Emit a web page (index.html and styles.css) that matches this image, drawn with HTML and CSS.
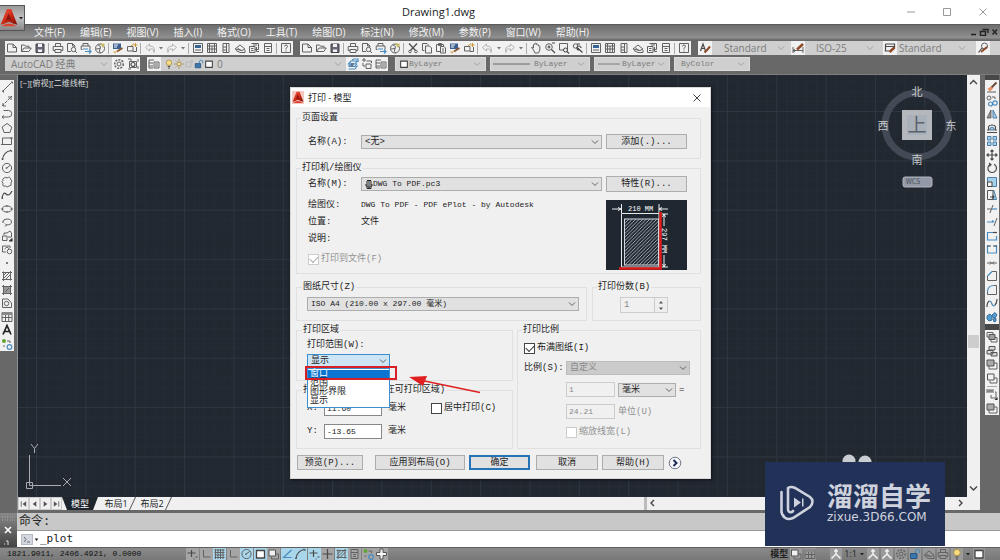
FILE: index.html
```html
<!DOCTYPE html>
<html lang="zh-CN">
<head>
<meta charset="utf-8">
<title>Drawing1.dwg</title>
<link rel="stylesheet" href="styles.css">
</head>
<body>
<svg class="defs" aria-hidden="true">
  <defs>
    <linearGradient id="red" x1="0" y1="0" x2="1" y2="1"><stop offset="0" stop-color="#f0604a"/><stop offset=".5" stop-color="#cf2a17"/><stop offset="1" stop-color="#7d0f08"/></linearGradient>
    <pattern id="grid" x="18" y="36" width="49.35" height="49.35" patternUnits="userSpaceOnUse">
      <path d="M10.4 0V50M20.2 0V50M30.1 0V50M40 0V50M0 10.4H50M0 20.2H50M0 30.1H50M0 40H50" stroke="#242b34" fill="none"/>
      <path d="M.5 0V50M0 .5H50" stroke="#2e3641" fill="none"/>
    </pattern>
    <pattern id="hatch" width="3.5" height="3.5" patternUnits="userSpaceOnUse"><path d="M-1 4.5L4.5 -1M-1 1L1 -1M2.5 4.5L4.5 2.5" stroke="#c5c9cf" stroke-width=".8"/></pattern>
  </defs>
  <symbol id="logo" viewBox="0 0 16 18"><path d="M6 1H10L15.500 15L11.500 14Q8 11 4.500 14L.5 15Z" fill="url(#red)"/><path d="M7.500 5L5 12Q8 9 10.500 12Z" fill="#8c150c"/><path d="M1 16.500Q8 11.500 15 16.500Z" fill="#d9432f"/></symbol>
  <symbol id="down" viewBox="0 0 8 6"><path d="M1 1.500L4 4.500L7 1.500" class="k"/></symbol>
  <symbol id="tri" viewBox="0 0 6 12"><path d="M1 5H5L3 7.500Z" fill="currentColor"/></symbol>
  <symbol id="new" viewBox="0 0 12 12"><path d="M1.500 2H7L10.500 5.500V10H1.500ZM7 2V5.500H10.500" class="k"/></symbol>
  <symbol id="open" viewBox="0 0 12 12"><path d="M1.500 9.500V3H4.500L5.500 4.200H9V6M1.500 9.500L4 6H11.300L8.800 9.500Z" class="k"/></symbol>
  <symbol id="save" viewBox="0 0 12 12"><path d="M2 2H10V10.500H2Z" fill="#667" stroke="#444"/><path d="M4 2H8V5H4ZM4 7.500H8V10H4Z" fill="#f4f4f4"/></symbol>
  <symbol id="print" viewBox="0 0 12 12"><path d="M3.500 4.500V1.500H8.500V4.500M3 8.500H1.200V4.500H10.800V8.500H9M3 7.500H9V10.500H3Z" class="k"/></symbol>
  <symbol id="preview" viewBox="0 0 12 12"><path d="M5 9.500H1.500V1.500H6.500L9 4V5M6.500 1.500V4H9" class="k"/><circle cx="7.500" cy="7.500" r="2.200" class="k"/><path d="M9 9L11 11" class="k"/></symbol>
  <symbol id="publish" viewBox="0 0 12 12"><path d="M3 4V1.500H8V4M2.500 7.500H1.200V4H10V7.500" class="k"/><path d="M3 7H8M5 9.500H11M9 7.500L11 9.500L9 11.500" class="b"/></symbol>
  <symbol id="globe" viewBox="0 0 12 12"><circle cx="6" cy="6.500" r="4.500" class="k"/><path d="M4 3Q8 4 6 7T7 11M2 7L6 6.500" class="k"/><path d="M6 1L11 2L9 6Z" fill="#c9b860"/></symbol>
  <symbol id="match" viewBox="0 0 12 12"><path d="M1 1.500H9V7H1Z" fill="#3c5f91"/><path d="M2 3H6M2 5H5" stroke="#fff"/><path d="M5 9.500L10.500 6" stroke="#8b572d" stroke-width="2"/><path d="M1 9.500H5L3 11.500Z" fill="#d6a44a"/></symbol>
  <symbol id="block" viewBox="0 0 12 12"><path d="M1.500 4.500H7V9H1.500ZM7 9.500H10.500V5" class="k"/><path d="M5 4L8 1.500M9.500 1V5M7.500 3H11.500" stroke="#c99834" fill="none"/></symbol>
  <symbol id="undo" viewBox="0 0 12 12"><path d="M5.500 2L1.500 5.500L5.500 9V7H8Q10 7 10 10.500Q12 4 5.500 4Z" class="g"/></symbol>
  <symbol id="redo" viewBox="0 0 12 12"><path d="M6.500 2L10.500 5.500L6.500 9V7H4Q2 7 2 10.500Q0 4 6.500 4Z" class="g"/></symbol>
  <symbol id="props" viewBox="0 0 12 12"><path d="M1.500 1.500H10.500V10.500H1.500Z" class="k"/><path d="M3 3H9V6H3Z" fill="#376694"/><path d="M3 8H9" class="k"/></symbol>
  <symbol id="dc" viewBox="0 0 12 12"><path d="M1.500 1.500H10.500V10.500H1.500ZM3.500 2V10M1.500 4H10.500M1.500 7H10.500M6 4V10M8.500 2V10" class="k"/></symbol>
  <symbol id="palette" viewBox="0 0 12 12"><path d="M3 1.500H9V10.500H3ZM6.500 1.500V10.500M3 5H6M3 8H6" class="k"/></symbol>
  <symbol id="sheet" viewBox="0 0 12 12"><path d="M1 7L6 3L11 7L8 8.500ZM2 8.500L6 10.500H11V8M3.500 6L7 8.500" class="k"/></symbol>
  <symbol id="markup" viewBox="0 0 12 12"><path d="M3.500 1.500H10.500V7.500H7M1.500 4.500H7V10.500H1.500ZM3 6.500H5.500M3 8.500H5.500M5 3H9M8.500 5V9.500H11" class="k"/></symbol>
  <symbol id="calc" viewBox="0 0 12 12"><path d="M2.500 1.500H9.500V10.500H2.500ZM2.500 4.500H9.500M4.500 6.500H7.500M4.500 8.500H7.500" class="k"/></symbol>
  <symbol id="help" viewBox="0 0 12 12"><path d="M1.500 1.500H10.500V10.500H1.500ZM4.500 4.500Q4.500 3 6 3Q7.500 3 7.500 4.500L6 6.500V7.500M6 8.500V9.500" class="k"/></symbol>
  <symbol id="cut" viewBox="0 0 12 12"><path d="M2 1.500L8.500 8.500M10 1.500L3.500 8.500" class="k2"/><circle cx="3" cy="9.500" r="1.300" class="k"/><circle cx="9" cy="9.500" r="1.300" class="k"/></symbol>
  <symbol id="copy" viewBox="0 0 12 12"><path d="M3.500 8.500H1.500V1.500H6L7.500 3M4.500 4H8.500L10.500 6V11H4.500Z" class="k"/></symbol>
  <symbol id="paste" viewBox="0 0 12 12"><path d="M5 9.500H1.500V2.500H8.500V4M3.500 1.500H6.500V3.500H3.500ZM5.500 4.500H9L10.500 6V11H5.500ZM7 7H9M7 9H9" class="k"/></symbol>
  <symbol id="pan" viewBox="0 0 12 12"><path d="M3.500 8L1.500 5.500Q2 4.500 3.500 6V2.500Q4.300 1.500 5 2.500V1.500Q6 .5 6.600 1.500V2.500Q7.500 1.500 8.300 3V4Q9.500 3 9.800 4.500V8L8.500 11H5Z" class="k"/></symbol>
  <symbol id="zoom" viewBox="0 0 12 12"><circle cx="5" cy="5" r="3.300" class="k"/><path d="M7.500 7.500L11 11M3.500 5H6.500M5 3.500V6.500M8 1H11" class="k2"/></symbol>
  <symbol id="zoomw" viewBox="0 0 12 12"><path d="M1.500 1.500H9.500V8H1.500Z" class="k"/><circle cx="7.500" cy="8" r="2" fill="#f2f2f2" stroke="#444"/><path d="M9 9.500L11 11.500" class="k2"/></symbol>
  <symbol id="zoomp" viewBox="0 0 12 12"><circle cx="3.500" cy="4" r="2.200" class="k"/><path d="M5 5.500L10.500 10.500M5 2H8M9 6A2 2 0 1 0 7 8" class="k2"/></symbol>
  <symbol id="style" viewBox="0 0 12 12"><path d="M1.500 9L4 2L6.500 9M2.500 6.500H5.500" class="k2"/><path d="M5.500 10.500L8 8L11 4.500" stroke="#8b4a25" stroke-width="2" fill="none"/></symbol>
  <symbol id="dim" viewBox="0 0 12 12"><path d="M1 5V11M11 5V11M1 8.500H11M3 7L1 8.500L3 10" class="k"/><path d="M5 7.500L11 2" stroke="#8b4a25" stroke-width="2.500"/></symbol>
  <symbol id="tbl" viewBox="0 0 12 12"><path d="M1.500 2H10.500V6M1.500 2V9H5M1.500 4.500H10.500" class="k2"/><path d="M5.500 10L10.500 5.500" stroke="#8b4a25" stroke-width="2.500"/></symbol>
  <symbol id="mld" viewBox="0 0 12 12"><circle cx="7.500" cy="4" r="3" class="k"/><path d="M5 6L1.500 10.500" class="k2"/><path d="M4 10L10 5" stroke="#8b4a25" stroke-width="2"/></symbol>
  <symbol id="gear" viewBox="0 0 12 12"><circle cx="6" cy="6" r="4.300" stroke="#666" stroke-width="1.600" stroke-dasharray="2 1.200" fill="none"/><circle cx="6" cy="6" r="2" class="k"/></symbol>
  <symbol id="ws" viewBox="0 0 12 12"><path d="M1 1L4 1V3M11 1V4M1 11H4M11 11V8M2.500 3.500H9.500V9.500H2.500Z" class="k"/><circle cx="6" cy="6.500" r="2" class="k2"/></symbol>
  <symbol id="layers" viewBox="0 0 12 12"><path d="M1 2H6M1 5H5M1 8H5M1 2V10H5M6 4H11V10H6ZM7 6H10M7 8H10" class="k"/></symbol>
  <symbol id="lay2" viewBox="0 0 12 12"><path d="M1.500 6L4 3H10L8 6ZM1.500 8.500L3.500 6M1.500 8.500H8L10 5.500M1.500 11H8L10.500 7.500M5 2L7 1H11V4" class="b"/><path d="M4 5H7L6 9H3Z" fill="#59799b"/></symbol>
  <symbol id="lay3" viewBox="0 0 12 12"><path d="M1 2H5M3 0V4M5.500 3H10.500V5M5 6H10V10.500H5ZM2 5V8H4" class="k"/></symbol>
  <symbol id="bulb" viewBox="0 0 12 12"><circle cx="6" cy="4.500" r="3.300" fill="#f7dc85" stroke="#a9904a"/><path d="M4.500 9H7.500M5 11H7" class="k2"/></symbol>
  <symbol id="sun" viewBox="0 0 12 12"><circle cx="6" cy="6" r="2.500" fill="#f5e19a" stroke="#8f773c"/><path d="M6 0V2M6 10V12M0 6H2M10 6H12M2 2L3 3M9 9L10 10M10 2L9 3M3 9L2 10" stroke="#a08236"/></symbol>
  <symbol id="page" viewBox="0 0 12 12"><path d="M2.500 3.500H8.500V9.500H2.500ZM8 2H10V5" class="g"/></symbol>
  <symbol id="lock" viewBox="0 0 12 12"><path d="M1.500 5.500H8V10.500H1.500Z" fill="#3977ad" stroke="#295780"/><path d="M6.500 5V2.500Q8.500 0 10.500 2.500V5" class="b"/></symbol>
  <symbol id="sq" viewBox="0 0 12 12"><path d="M2 2.500H10V10H2Z" fill="#fff" stroke="#444" stroke-width="1.300"/></symbol>
  <symbol id="rule" viewBox="0 0 40 12" preserveAspectRatio="none"><path d="M0 6H40" stroke="#666"/></symbol>
  <symbol id="line" viewBox="0 0 12 12"><path d="M1.500 10.500L10.500 1.500" class="k"/><path d="M1 10H2.500V11.500M10 1H11.500V2.500" class="k"/></symbol>
  <symbol id="xline" viewBox="0 0 12 12"><path d="M1 11L11 1" class="k" stroke-dasharray="3 1"/><path d="M2 8V11H5M7 2H10V5" class="k"/></symbol>
  <symbol id="pline" viewBox="0 0 12 12"><path d="M2.500 2.500H7.500A3 3 0 0 1 7.500 9H1.500M3 7.500L1 9L3 10.500" class="k"/></symbol>
  <symbol id="poly" viewBox="0 0 12 12"><path d="M6 1.500L10.800 5L9 10.500H3L1.200 5Z" class="k"/></symbol>
  <symbol id="rect" viewBox="0 0 12 12"><path d="M1.500 3H10.500V9.500H1.500ZM0 9.500H3M9 3H12" class="k"/></symbol>
  <symbol id="arc" viewBox="0 0 12 12"><path d="M1.500 11Q2 3 10 1.500M.5 10H2.500M9 1L11 2.500" class="k2"/></symbol>
  <symbol id="circle" viewBox="0 0 12 12"><circle cx="6" cy="6" r="4.600" class="k"/><path d="M5 6.500L9 3.500M4.500 6H6.500" class="k"/></symbol>
  <symbol id="cloud" viewBox="0 0 12 12"><path d="M3 2Q5 .5 6 2Q9 0 9.500 3Q12 5 10 7Q11 10 8 10Q6 12 4.500 10Q1 11 2 7.500Q0 5 2 4.500Q1 3 3 2Z" class="k"/></symbol>
  <symbol id="spline" viewBox="0 0 12 12"><path d="M1 10Q2 2 5 5T11 2M1 9.500H2" class="k2"/></symbol>
  <symbol id="ellipse" viewBox="0 0 12 12"><ellipse cx="6" cy="6" rx="4.700" ry="3" class="k"/><path d="M6 2V4M6 8V10M0 6H2.500M9.500 6H12" class="k"/></symbol>
  <symbol id="earc" viewBox="0 0 12 12"><path d="M2 6Q2 3 6 3Q10.500 3 10.500 6Q10.500 9 5 9M4 7.500L5.500 9L4 10.500M1 6H3" class="k"/></symbol>
  <symbol id="insert" viewBox="0 0 12 12"><path d="M1.500 6H6V10.500H1.500ZM3 5V3H6L9 1L10.500 3V7H7M8 11L11 8.500" class="k"/><path d="M11.500 8V11.500H8Z" fill="#222"/></symbol>
  <symbol id="mkblock" viewBox="0 0 12 12"><path d="M5 9H1.500V3H9V5M3.500 6L6 4L8.500 6" class="k"/><circle cx="8.500" cy="8.500" r="2.300" class="k"/></symbol>
  <symbol id="point" viewBox="0 0 12 12"><path d="M5.200 5.200H6.800V6.800H5.200Z" fill="#333"/></symbol>
  <symbol id="hatchi" viewBox="0 0 12 12"><path d="M2.500 1.500V11M9.500 1V10.500M1 2.500H11M1 9.500H11M2 9L9 2M4 10L10 4M2 6L6 2" class="k"/></symbol>
  <symbol id="grad" viewBox="0 0 12 12"><path d="M2.500 2.500H9.500V9.500H2.500Z" fill="#999"/><path d="M2.500 1V11M9.500 1V11M1 2.500H11M1 9.500H11M4 8L8 4" class="k"/></symbol>
  <symbol id="region" viewBox="0 0 12 12"><path d="M1.500 2H7L10.500 6V10.500H1.500Z" class="k"/><circle cx="5.500" cy="6.500" r="2.200" class="k"/></symbol>
  <symbol id="table" viewBox="0 0 12 12"><path d="M1 1.500H11V10.500H1ZM1 6.500H11M4.500 3V10.500M7.700 3V10.500" class="k"/><path d="M1 1H11V4H1Z" fill="#888"/></symbol>
  <symbol id="mtext" viewBox="0 0 12 12"><path d="M2 10.500L6 1.500L10 10.500M3.500 7.500H8.500" fill="none" stroke="#222" stroke-width="1.700"/></symbol>
  <symbol id="addsel" viewBox="0 0 12 12"><circle cx="3" cy="3" r="2" fill="#60a532"/><circle cx="8.500" cy="9" r="2.300" class="b"/><path d="M6 3H9V5M2 8H4" class="k"/></symbol>
  <symbol id="erase" viewBox="0 0 12 12"><path d="M4 8L10.500 1.500" stroke="#6b4a35" stroke-width="2"/><path d="M1.500 8L4 10.500L7 7.500L5 5.500Z" fill="#e39062"/><path d="M1 11H10" class="k"/></symbol>
  <symbol id="cpy" viewBox="0 0 12 12"><circle cx="3" cy="3" r="2" class="k"/><circle cx="4.500" cy="9" r="2" class="b"/><circle cx="9" cy="8" r="2.200" class="b"/><path d="M6 2H9V4" class="k"/></symbol>
  <symbol id="mirror" viewBox="0 0 12 12"><path d="M5 2L1 10H5Z" fill="#999" stroke="#444" stroke-width=".7"/><path d="M7 2L11 10H7Z" class="f"/></symbol>
  <symbol id="offset" viewBox="0 0 12 12"><path d="M1 10.500H11M1 8H3Q1 3 6 3T9 8H11" class="k2"/><path d="M4 8Q4 5 6 5T8 8Z" class="f"/></symbol>
  <symbol id="array" viewBox="0 0 12 12"><path d="M1.500 1.500H5V5H1.500ZM7 1.500H10.500V5H7ZM1.500 7H5V10.500H1.500ZM7 7H10.500V10.500H7Z" class="f"/></symbol>
  <symbol id="move" viewBox="0 0 12 12"><path d="M6 1V11M1 6H11M4.500 2.500L6 1L7.500 2.500M4.500 9.500L6 11L7.500 9.500M2.500 4.500L1 6L2.500 7.500M9.500 4.500L11 6L9.500 7.500" class="k2"/></symbol>
  <symbol id="rotate" viewBox="0 0 12 12"><path d="M4 2.500A4.300 4.300 0 1 0 8 2.300M3 1L5 2.500L3.500 4.500" class="k2"/></symbol>
  <symbol id="scale" viewBox="0 0 12 12"><path d="M1.500 1.500H10.500V10.500H1.500Z" class="f"/><path d="M1.500 6H6V10.500H1.500Z" fill="#f4f4f4" stroke="#444"/></symbol>
  <symbol id="stretch" viewBox="0 0 12 12"><path d="M5 1.500H8L10.500 10.500H5Z" class="f"/><path d="M1.500 1.500H7V10.500H1.500Z" fill="#f4f4f4" stroke="#555"/><path d="M4 8H8M6.500 6.500L8 8L6.500 9.500" class="k2"/></symbol>
  <symbol id="trim" viewBox="0 0 12 12"><path d="M1 6H5M4 10L7 2" class="k"/><path d="M6 6H11" class="b"/></symbol>
  <symbol id="extend" viewBox="0 0 12 12"><path d="M8 10L11 2" class="k"/><path d="M1 6H8M6 4.500L8 6" class="b"/></symbol>
  <symbol id="brk" viewBox="0 0 12 12"><path d="M8 2.500H1.500V10H10.500V6" class="b"/><path d="M7 2.500H11" class="k2"/></symbol>
  <symbol id="brk2" viewBox="0 0 12 12"><path d="M3.500 3H1.500V10H10.500V3H8.500" class="b"/><path d="M1 3H5M7 3H11" class="k2"/></symbol>
  <symbol id="join" viewBox="0 0 12 12"><path d="M1 6H11M4 4.500L5.500 6L4 7.500M8 4.500L6.500 6L8 7.500" class="k"/></symbol>
  <symbol id="chamf" viewBox="0 0 12 12"><path d="M1.500 6V10.500H10.500V1.500H6" class="k"/><path d="M1.500 6L6 1.500" class="b"/></symbol>
  <symbol id="fillet" viewBox="0 0 12 12"><path d="M1.500 8V10.500H10.500V1.500H8" class="k"/><path d="M1.500 8Q1.500 1.500 8 1.500" class="b"/></symbol>
  <symbol id="blend" viewBox="0 0 12 12"><path d="M1 10Q1 5 3.500 4M9 8Q11 6 11 2" class="k2"/><path d="M3.500 4Q5 4 6 7T9 8" class="b"/></symbol>
  <symbol id="explode" viewBox="0 0 12 12"><path d="M1 5L4 3L6 5V9L3 10L1 8Z" fill="#4f9fd2" stroke="#3c6f99"/><path d="M6 4L9 1.500L11 4L9 7L7 6.500ZM7 8L10 7.500V10L8 11Z" fill="#4f9fd2" stroke="#3c6f99"/></symbol>
  <symbol id="o1" viewBox="0 0 12 12"><path d="M1 1.500H7V6H1ZM5 6.500H11V11H5Z" class="k"/><path d="M3 3.500H9V8.500H3Z" fill="#9a9da2" stroke="#555"/></symbol>
  <symbol id="o2" viewBox="0 0 12 12"><path d="M3 1.500H9V5H3ZM1 5.500H7V9H1ZM5 7.500H11V11H5Z" fill="#d5d7da" stroke="#555"/></symbol>
  <symbol id="o3" viewBox="0 0 12 12"><path d="M3 5H11V11H3Z" class="k"/><path d="M1 2H8V8H1Z" fill="#aaa" stroke="#555"/></symbol>
  <symbol id="o4" viewBox="0 0 12 12"><path d="M5 6H11V11H4V9" class="k"/><path d="M1.500 2H8V8H1.500Z" fill="#f1f1f1" stroke="#555"/></symbol>
  <symbol id="o5" viewBox="0 0 12 12"><path d="M1 3H7M1 1V5M3 1V5M5 1V5M7 1V5M5 7V10H10V4H9" class="k"/><path d="M11.500 9V12H8.500Z" fill="#222"/></symbol>
  <symbol id="plus" viewBox="0 0 12 12"><path d="M6 1V11M1 6H11" class="k2"/></symbol>
  <symbol id="plusw" viewBox="0 0 12 12"><path d="M4.500 1H7.500V4.500H11V7.500H7.500V11H4.500V7.500H1V4.500H4.500Z" fill="#f5f5f5" stroke="#555"/></symbol>
  <symbol id="snap" viewBox="0 0 12 12"><path d="M5 2V9M1 5H9M9 9H11M7 11H8" class="k2"/></symbol>
  <symbol id="gridi" viewBox="0 0 12 12"><path d="M2 1V11M4.500 1V11M7 1V11M9.500 1V11M1 2H11M1 4.500H11M1 7H11M1 9.500H11" class="k"/></symbol>
  <symbol id="ortho" viewBox="0 0 12 12"><path d="M3 2V9H10" class="k"/></symbol>
  <symbol id="angle" viewBox="0 0 12 12"><path d="M10 2L2 9.500H10" class="b"/></symbol>
  <symbol id="first" viewBox="0 0 10 10"><path d="M2.500 2V8" class="k"/><path d="M8 2L4 5L8 8Z" fill="#555"/></symbol>
  <symbol id="prev" viewBox="0 0 10 10"><path d="M7 2L3 5L7 8Z" fill="#555"/></symbol>
  <symbol id="next" viewBox="0 0 10 10"><path d="M3 2L7 5L3 8Z" fill="#555"/></symbol>
  <symbol id="last" viewBox="0 0 10 10"><path d="M7.500 2V8" class="k"/><path d="M2 2L6 5L2 8Z" fill="#555"/></symbol>
  <symbol id="ppl" viewBox="0 0 12 12"><path d="M6 1V6L1.500 10.500M6 6L10.500 10.500M4 3H8" stroke="#f2f2f2" stroke-width="1.500" fill="none"/></symbol>
</svg>

<header class="title"><button class="app" aria-label="应用程序菜单"><svg class="applogo"><use href="#logo"/></svg><svg class="apparrow"><use href="#tri"/></svg></button>
  <h1>Drawing1.dwg</h1>
  <div class="wctl">
    <button aria-label="最小化"><svg viewBox="0 0 10 10"><path d="M1 5H9"/></svg></button>
    <button aria-label="最大化"><svg viewBox="0 0 10 10"><path d="M1.500 1.500H8.500V8.500H1.500Z"/></svg></button>
    <button aria-label="关闭"><svg viewBox="0 0 10 10"><path d="M1.500 1.500L8.500 8.500M8.500 1.500L1.500 8.500"/></svg></button>
  </div>
</header>

<nav class="menu">
  <button>文件(F)</button><button>编辑(E)</button><button>视图(V)</button><button>插入(I)</button><button>格式(O)</button><button>工具(T)</button><button>绘图(D)</button><button>标注(N)</button><button>修改(M)</button><button>参数(P)</button><button>窗口(W)</button><button>帮助(H)</button>
  <svg class="mdi" viewBox="0 0 28 8"><path d="M1 6.500H6M12.500 1.500H18V5M10.500 3.500H15.500V7.500H10.500ZM22.500 1.500L27 6.500M27 1.500L22.500 6.500"/></svg>
</nav>

<div class="bars">
  <div class="row">
    <div class="tb">
      <svg><use href="#new"/></svg><svg><use href="#open"/></svg><svg><use href="#save"/></svg><i></i>
      <svg><use href="#print"/></svg><svg><use href="#preview"/></svg><svg><use href="#publish"/></svg><svg><use href="#globe"/></svg><i></i>
      <svg><use href="#match"/></svg><svg><use href="#block"/></svg><i></i>
      <svg><use href="#undo"/></svg><svg class="t"><use href="#tri"/></svg><svg><use href="#redo"/></svg><svg class="t"><use href="#tri"/></svg><i></i>
      <svg><use href="#props"/></svg><svg><use href="#dc"/></svg><svg><use href="#palette"/></svg><svg><use href="#sheet"/></svg><svg><use href="#markup"/></svg><svg><use href="#calc"/></svg><i></i>
      <svg><use href="#help"/></svg>
    </div>
    <div class="tb wide">
      <svg><use href="#new"/></svg><svg><use href="#open"/></svg><svg><use href="#save"/></svg><i></i>
      <svg><use href="#print"/></svg><svg><use href="#preview"/></svg><svg><use href="#publish"/></svg><svg><use href="#globe"/></svg><i></i>
      <svg><use href="#cut"/></svg><svg><use href="#copy"/></svg><svg><use href="#paste"/></svg><svg><use href="#match"/></svg><svg><use href="#block"/></svg><i></i>
      <svg><use href="#undo"/></svg><svg class="t"><use href="#tri"/></svg><svg><use href="#redo"/></svg><svg class="t"><use href="#tri"/></svg><i></i>
      <svg><use href="#pan"/></svg><svg><use href="#zoom"/></svg><svg><use href="#zoomw"/></svg><svg><use href="#zoomp"/></svg><i></i>
      <svg><use href="#props"/></svg><svg><use href="#dc"/></svg><svg><use href="#palette"/></svg><svg><use href="#sheet"/></svg><svg><use href="#markup"/></svg><svg><use href="#calc"/></svg><i></i>
      <svg><use href="#help"/></svg>
    </div>
    <div class="styles">
      <span class="cell"><svg><use href="#style"/></svg></span>
      <span class="combo c1"><select aria-label="文字样式"><option>Standard</option></select><svg class="dn"><use href="#down"/></svg></span>
      <span class="cell"><svg><use href="#dim"/></svg></span>
      <span class="combo c2"><select aria-label="标注样式"><option>ISO-25</option></select><svg class="dn"><use href="#down"/></svg></span>
      <span class="cell"><svg><use href="#tbl"/></svg></span>
      <span class="combo c3"><select aria-label="表格样式"><option>Standard</option></select><svg class="dn"><use href="#down"/></svg></span>
      <span class="cell"><svg><use href="#mld"/></svg></span>
    </div>
  </div>
  <div class="row">
    <div class="grp wsg">
      <span class="combo wsp"><select aria-label="工作空间"><option>AutoCAD 经典</option></select><svg class="dn"><use href="#down"/></svg></span>
      <span class="cell"><svg><use href="#gear"/></svg><svg><use href="#ws"/></svg></span>
    </div>
    <div class="grp layg">
      <span class="cell"><svg><use href="#layers"/></svg></span>
      <span class="combo layc"><svg class="s"><use href="#bulb"/></svg><svg class="s"><use href="#sun"/></svg><svg class="s"><use href="#page"/></svg><svg class="s"><use href="#lock"/></svg><svg class="s"><use href="#sq"/></svg><select aria-label="图层"><option>0</option></select><svg class="dn"><use href="#down"/></svg></span>
      <span class="cell"><svg><use href="#lay2"/></svg><svg><use href="#lay3"/></svg><svg><use href="#layers"/></svg></span>
    </div>
    <div class="grp prop">
      <span class="combo p1"><svg class="s"><use href="#sq"/></svg><select aria-label="颜色"><option>ByLayer</option></select><svg class="dn"><use href="#down"/></svg></span>
      <span class="combo p2"><svg class="rl"><use href="#rule"/></svg><select aria-label="线型"><option>ByLayer</option></select><svg class="dn"><use href="#down"/></svg></span>
      <span class="combo p3"><svg class="rs"><use href="#rule"/></svg><select aria-label="线宽"><option>ByLayer</option></select><svg class="dn"><use href="#down"/></svg></span>
      <span class="combo p4"><select aria-label="打印样式"><option>ByColor</option></select><svg class="dn"><use href="#down"/></svg></span>
    </div>
  </div>
</div>

<main class="work">
  <aside class="left"><div class="vt draw">
    <svg><use href="#line"/></svg><svg><use href="#xline"/></svg><svg><use href="#pline"/></svg><svg><use href="#poly"/></svg><svg><use href="#rect"/></svg><svg><use href="#arc"/></svg><svg><use href="#circle"/></svg><svg><use href="#cloud"/></svg><svg><use href="#spline"/></svg><svg><use href="#ellipse"/></svg><svg><use href="#earc"/></svg><svg><use href="#insert"/></svg><svg><use href="#mkblock"/></svg><svg><use href="#point"/></svg><svg><use href="#hatchi"/></svg><svg><use href="#grad"/></svg><svg><use href="#region"/></svg><svg><use href="#table"/></svg><svg><use href="#mtext"/></svg><svg><use href="#addsel"/></svg>
  </div></aside>
  <section class="doc">
    <div class="view">
      <svg class="gridlines"><rect width="100%" height="100%" fill="url(#grid)"/></svg>
      <p class="vlabel">[−][俯视][二维线框]</p>
      <svg class="cube" viewBox="0 0 84 104">
        <circle cx="42" cy="41" r="32" fill="none" stroke="#434a55" stroke-width="7"/>
        <path d="M27 26H57V56H27Z" fill="#b4b7bb"/><path d="M32 31H52V51H32Z" fill="#a9b0b9"/>
        <text x="42" y="48" class="top">上</text>
        <text x="42" y="12">北</text><text x="42" y="80">南</text><text x="8" y="46">西</text><text x="76" y="46">东</text>
        <rect x="28" y="93" width="29" height="10" rx="2" fill="#9399a6" stroke="#b0b5bf"/><text x="38" y="100" class="wcs">WCS</text>
      </svg>
      <svg class="ucs" viewBox="0 0 54 54"><path d="M7.500 13V43.500M7.500 43.500H39M4.500 40.500H10.500V46.500H4.500ZM41 36L49 44M49 36L41 44M9 2L12.500 6.500L16 2M12.500 6.500V11"/></svg>
      <svg class="dots" viewBox="0 0 30 10"><circle cx="7" cy="7" r="6.500"/><circle cx="23" cy="8" r="6.500"/></svg>
    </div>
    <div class="vs"><svg><path d="M3 7L6.500 3.500L10 7"/></svg><span class="thumb"></span><svg><path d="M3 3.500L6.500 7L10 3.500"/></svg></div>
    <div class="tabs">
      <div class="navs"><button aria-label="第一个"><svg><use href="#first"/></svg></button><button aria-label="上一个"><svg><use href="#prev"/></svg></button><button aria-label="下一个"><svg><use href="#next"/></svg></button><button aria-label="最后一个"><svg><use href="#last"/></svg></button></div>
      <button class="tab on">模型</button><button class="tab">布局1</button><button class="tab">布局2</button>
      <div class="hs"><svg><path d="M7 3L4 6L7 9"/></svg><svg><path d="M4 3L7 6L4 9"/></svg></div>
    </div>
  </section>
  <aside class="right">
    <div class="vt mod">
      <svg><use href="#erase"/></svg><svg><use href="#cpy"/></svg><svg><use href="#mirror"/></svg><svg><use href="#offset"/></svg><svg><use href="#array"/></svg><svg><use href="#move"/></svg><svg><use href="#rotate"/></svg><svg><use href="#scale"/></svg><svg><use href="#stretch"/></svg><svg><use href="#trim"/></svg><svg><use href="#extend"/></svg><svg><use href="#brk"/></svg><svg><use href="#brk2"/></svg><svg><use href="#join"/></svg><svg><use href="#chamf"/></svg><svg><use href="#fillet"/></svg><svg><use href="#blend"/></svg><svg><use href="#explode"/></svg>
    </div>
    <div class="vt ord">
      <svg><use href="#o1"/></svg><svg><use href="#o2"/></svg><svg><use href="#o3"/></svg><svg><use href="#o4"/></svg><i></i><svg><use href="#o5"/></svg><svg><use href="#o3"/></svg>
    </div>
  </aside>
</main>

<section class="cmd">
  <div class="grip"><svg viewBox="0 0 17 34"><path d="M2 4H15M2 7H15" stroke="#aaa" stroke-dasharray="1 1.500"/><path d="M5 14L11 20M11 14L5 20" stroke="#fff" stroke-width="1.600"/><path d="M4 31H5M6 28H8V32" stroke="#ddd"/></svg></div>
  <div class="lines"><p>命令:</p>
    <div class="entry"><svg viewBox="0 0 12 11"><rect x=".5" y=".5" width="11" height="10" fill="#d4d8de" stroke="#b6bac2"/><path d="M3 3L5 5.500L3 8M6 8H9" fill="none" stroke="#667"/></svg><svg class="t"><use href="#tri"/></svg><input aria-label="命令" value="_plot"></div></div>
</section>

<footer class="status">
  <output>1821.9011, 2406.4921, 0.0000</output>
  <div class="st">
    <svg><use href="#snap"/></svg><svg><use href="#ortho"/></svg><svg class="on"><use href="#gridi"/></svg><svg><use href="#ortho"/></svg><svg class="on"><use href="#circle"/></svg><svg class="on"><use href="#sq"/></svg><svg><use href="#o4"/></svg><svg class="on"><use href="#angle"/></svg><svg class="on"><use href="#arc"/></svg><svg class="on"><use href="#snap"/></svg><svg><use href="#plus"/></svg><svg class="on"><use href="#hatchi"/></svg><svg><use href="#calc"/></svg><svg><use href="#addsel"/></svg><svg><use href="#plusw"/></svg>
  </div>
  <div class="sr"><b>模型</b><svg><use href="#o4"/></svg><svg><use href="#table"/></svg><em></em><svg><use href="#ppl"/></svg><span>1:1</span><svg class="t"><use href="#tri"/></svg><svg><use href="#ppl"/></svg><svg><use href="#ppl"/></svg><svg><use href="#gear"/></svg><svg><use href="#lock"/></svg><svg><use href="#sheet"/></svg><svg><use href="#print"/></svg><svg><use href="#bulb"/></svg><svg class="t"><use href="#tri"/></svg><svg><use href="#sq"/></svg></div>
</footer>

<div class="dialog" role="dialog" aria-labelledby="dt">
  <div class="dtitle"><svg class="dlogo"><use href="#logo"/></svg><h2 id="dt">打印 - 模型</h2><button aria-label="关闭"><svg viewBox="0 0 10 10"><path d="M1.500 1.500L8.500 8.500M8.500 1.500L1.500 8.500"/></svg></button></div>
  <form class="body">
    <fieldset class="fs setup"><legend>页面设置</legend>
      <div class="f"><label for="a">名称(A):</label><span class="sel"><select id="a"><option>&lt;无&gt;</option></select><svg class="dn"><use href="#down"/></svg></span></div>
      <button type="button" class="btn">添加(.)...</button>
    </fieldset>
    <fieldset class="fs printer"><legend>打印机/绘图仪</legend>
      <div class="pl">
        <div class="f"><label for="m">名称(M):</label><span class="sel"><svg class="prn" viewBox="0 0 8 9"><path d="M1 2H7M2 .5H6M1 4H7V6H1ZM2 6V8.500H6V6M3 7.200H5"/></svg><select id="m" class="lat"><option>DWG To PDF.pc3</option></select><svg class="dn"><use href="#down"/></svg></span></div>
        <dl><dt>绘图仪:</dt><dd class="lat">DWG To PDF - PDF ePlot - by Autodesk</dd><dt>位置:</dt><dd>文件</dd><dt>说明:</dt><dd></dd></dl>
        <label class="ck off"><input type="checkbox" checked disabled>打印到文件(F)</label>
      </div>
      <div class="pr"><button type="button" class="btn">特性(R)...</button>
        <svg class="pv" viewBox="0 0 81 70"><rect width="81" height="70" fill="#1f2831"/><path d="M15.500 13.500H53V67H15.500Z" fill="none" stroke="#e8e8e8"/><rect x="18.500" y="19" width="34" height="46" fill="url(#hatch)" stroke="#d5d8dc"/><path d="M15.500 4V13M53 4V13M6 9H15M12 7.500L15 9L12 10.500M62 9H53M56 7.500L53 9L56 10.500M55 14H62M55 67H62M58 14V26M58 55V67M56.500 17L58 14L59.500 17M56.500 64L58 67L59.500 64" fill="none" stroke="#eee"/><path d="M54.500 12V68M13 68.500H56" stroke="#e01a1a" stroke-width="2.500"/><text x="22" y="11">210 MM</text><text transform="translate(56 28) rotate(90)">297 MM</text></svg>
      </div>
    </fieldset>
    <div class="two size">
      <fieldset class="fs"><legend>图纸尺寸(Z)</legend><span class="sel"><select aria-label="图纸尺寸" class="lat"><option>ISO A4 (210.00 x 297.00 毫米)</option></select><svg class="dn"><use href="#down"/></svg></span></fieldset>
      <fieldset class="fs copies"><legend>打印份数(B)</legend><span class="spin"><input aria-label="打印份数" value="1" disabled><span class="ud"><button type="button" aria-label="增加" disabled><svg viewBox="0 0 6 4"><path d="M1 3.500H5L3 1Z"/></svg></button><button type="button" aria-label="减少" disabled><svg viewBox="0 0 6 4"><path d="M1 .5H5L3 3Z"/></svg></button></span></span></fieldset>
    </div>
    <div class="two lower">
      <div class="lc">
        <fieldset class="fs area"><legend>打印区域</legend><label for="w">打印范围(W):</label>
          <div class="drop"><span class="sel open"><select id="w"><option>显示</option></select><svg class="dn"><use href="#down"/></svg></span>
            <ul class="pop"><li class="cur">窗口</li><li>范围</li><li>图形界限</li><li>显示</li></ul>
            <div class="mark"></div>
            <svg class="arrow" viewBox="0 0 76 22"><path d="M72 18.500L14 6.500" stroke="#e02020" stroke-width="1.500"/><path d="M1 3L19 2L15 12Z" fill="#e02020"/></svg>
          </div>
        </fieldset>
        <fieldset class="fs offs"><legend>打印偏移 (原点设置在可打印区域)</legend>
          <div class="xy"><label for="x">X:</label><input id="x" class="tx lat" value="11.60"><span>毫米</span><label class="ck"><input type="checkbox">居中打印(C)</label></div>
          <div class="xy"><label for="y">Y:</label><input id="y" class="tx lat" value="-13.65"><span>毫米</span></div>
        </fieldset>
      </div>
      <fieldset class="fs scale"><legend>打印比例</legend>
        <label class="ck"><input type="checkbox" checked>布满图纸(I)</label>
        <div class="sg"><label for="s">比例(S):</label><span class="sel dis"><select id="s" disabled><option>自定义</option></select><svg class="dn"><use href="#down"/></svg></span></div>
        <div class="sg"><span></span><div class="u"><input class="tx lat" aria-label="图纸单位" value="1" disabled><span class="sel mm"><select aria-label="单位"><option>毫米</option></select><svg class="dn"><use href="#down"/></svg></span><span>=</span></div></div>
        <div class="sg"><span></span><div class="u off"><input class="tx lat" id="u" value="24.21" disabled><label for="u">单位(U)</label></div></div>
        <div class="sg"><span></span><label class="ck off"><input type="checkbox" disabled>缩放线宽(L)</label></div>
      </fieldset>
    </div>
    <div class="acts"><button type="button" class="btn b1">预览(P)...</button><button type="button" class="btn b2">应用到布局(O)</button><button type="button" class="btn b3">确定</button><button type="button" class="btn b4">取消</button><button type="button" class="btn b4">帮助(H)</button><button type="button" class="more" aria-label="更多选项"><svg viewBox="0 0 14 14"><circle cx="7" cy="7" r="5.800" fill="#f4f6fa" stroke="#777c8c"/><path d="M5.500 4L8.500 7L5.500 10" fill="none" stroke="#1d2c54" stroke-width="2"/></svg></button></div>
  </form>
</div>

<div class="brand">
  <svg viewBox="0 0 36 36"><path d="M9 3Q12 1 16 3L31 12Q36 16 31 22L14 33Q7 36 4 30M9 3V24Q9 28 13 27L14 26M2.500 7V27Q3 30 5 32" fill="none" stroke="#ced2dc" stroke-width="2.600" stroke-linecap="round"/><path d="M15 12.500L22 17.500L15 22.500ZM23 13.500H24.500V21.500H23Z" fill="#ced2dc"/></svg>
  <div><strong>溜溜自学</strong><span>zixue.3D66.COM</span></div>
</div>
</body>
</html>
```
FILE: styles.css
```css
* { box-sizing: border-box; }
body { margin: 0; height: 100vh; min-height: 560px; display: flex; flex-direction: column; position: relative; overflow: hidden; background: #686868; font-family: "Open Sans", "Noto Sans CJK SC", sans-serif; font-size: 10px; color: #222; }
h1, h2, p, ul, dl, dd { margin: 0; padding: 0; font-weight: normal; }
button, input, select { font: inherit; color: inherit; margin: 0; padding: 0; border: 0; background: none; border-radius: 0; min-width: 0; }
select { appearance: none; flex: 1; width: 0; opacity: 1; outline: none; }
svg { flex: none; display: block; }
.defs { position: absolute; width: 0; height: 0; }
.k { fill: none; stroke: #626262; stroke-width: 1; }
.k2 { fill: none; stroke: #4a4a4a; stroke-width: 1.2; }
.b { fill: none; stroke: #4a8cc0; stroke-width: 1.2; }
.g { fill: none; stroke: #b0b3b7; stroke-width: 1; }
.f { fill: #a5d1ea; stroke: #4f7fa6; stroke-width: 1; }
.dn { width: 8px; height: 6px; }

.title { flex: none; height: 24px; background: #fff; display: flex; align-items: center; position: relative; }
.title h1 { flex: 1; font-size: 11px; line-height: 24px; padding-left: 402px; }
.app { position: absolute; z-index: 2; left: 0; top: 5px; width: 25px; height: 26px; background: linear-gradient(#9a9a9a, #c0c0c0 50%, #888); border: 1px solid #555; border-left: 0; display: flex; align-items: center; }
.applogo { width: 18px; height: 20px; }
.apparrow { width: 6px; height: 12px; }
.wctl { display: flex; gap: 26px; padding-right: 12px; }
.wctl svg { width: 10px; height: 10px; fill: none; stroke: #999; }
.menu { flex: none; height: 16px; background: linear-gradient(#4c4c4c, #6e6e6e 8%, #8f8f8f 85%, #686868); display: flex; align-items: center; gap: 15px; padding: 0 2px 0 34px; color: #f2f2f2; }
.menu button { line-height: 16px; white-space: nowrap; }
.mdi { width: 28px; height: 8px; margin-left: auto; fill: none; stroke: #222; stroke-width: 1.4; }

.bars { flex: none; padding: 1px 0 3px 5px; display: flex; flex-direction: column; gap: 2px; color: #777; }
.row { display: flex; height: 14px; gap: 7px; }
.tb, .cell { display: flex; align-items: center; gap: 2px; padding: 0 1px; background: #f1f1f1; }
.tb svg, .cell svg { width: 12px; height: 12px; }
.tb i { width: 2px; height: 11px; border-left: 1px solid #aaa; }
.tb svg.t { width: 6px; }
.wide { width: 391px; justify-content: space-between; gap: 0; }
.styles { flex: 1; display: flex; background: #d0d0d0; }
.combo { display: flex; align-items: center; padding-right: 4px; background: #cfcfcf; height: 100%; color: #7c7c7c; }
.combo .dn { opacity: .4; }
.combo select { line-height: 14px; height: 14px; }
.c1 { width: 77px; padding-left: 12px; margin-right: 2px; }
.c2 { width: 73px; padding-left: 11px; margin-right: 5px; }
.c3 { width: 73px; padding-left: 2px; margin-right: 6px; }
.grp { display: flex; background: #e2e2e2; }
.wsg { width: 135px; }
.wsp { flex: 1; padding-left: 6px; }
.layg { width: 241px; }
.layc { flex: 1; padding-left: 3px; }
svg.s { width: 10px; height: 10px; }
.layc select { padding-left: 3px; }
.prop { gap: 4px; background: none; font-family: "Liberation Mono", monospace; font-size: 8px; }
.prop .combo { border: 1px solid #dcdcdc; }
.prop select { height: 12px; line-height: 12px; }
.p1 { width: 91px; padding-left: 3px; }
.p2 { width: 100px; padding-left: 2px; gap: 4px; }
.p3 { width: 76px; padding-left: 3px; gap: 2px; }
.p4 { width: 76px; padding-left: 6px; }
.rl { width: 37px; height: 12px; }
.rs { width: 22px; height: 12px; }

.work { flex: 1; display: flex; min-height: 0; border-top: 1px solid #7d7d7d; }
.left { width: 18px; padding-top: 5px; border-right: 1px solid #8a8f93; }
.vt { width: 14px; background: #f1f1f1; display: flex; flex-direction: column; align-items: center; justify-content: space-between; padding: 1px 0; }
.vt svg { width: 12px; height: 12px; }
.draw { height: 271px; }
.right { width: 20px; padding-left: 5px; }
.mod { border-top: 5px solid #484848; height: 249px; }
.ord { border-top: 6px solid #484848; height: 91px; }
.vt i { width: 10px; border-top: 1px solid #aaa; }
.doc { flex: 1; display: grid; grid-template-columns: 1fr 13px; grid-template-rows: 1fr 13px; margin-bottom: 3px; min-width: 0; }
.view { position: relative; background: #212830; overflow: hidden; color: #ddd; }
.gridlines { position: absolute; width: 100%; height: 100%; }
.vlabel { position: relative; padding: 2px; font-size: 8px; line-height: 12px; }
.cube { position: absolute; right: 8px; top: 9px; width: 84px; height: 104px; }
.cube text { font-family: "Noto Sans CJK SC", sans-serif; font-size: 11px; text-anchor: middle; fill: #c8cacd; }
.cube .top { font-size: 19px; fill: #59616c; }
.cube .wcs { font-size: 7px; fill: #4b515c; }
.ucs { position: absolute; left: 4px; bottom: 1px; width: 54px; height: 54px; fill: none; stroke: #a8acb1; stroke-width: 1; }
.dots { position: absolute; right: 95px; bottom: 33px; width: 30px; height: 10px; fill: #c9ccd1; }
.vs { background: #f0f0f0; display: flex; flex-direction: column; align-items: center; justify-content: space-between; padding: 2px 0; }
.vs svg, .hs svg { width: 13px; height: 12px; fill: none; stroke: #444; stroke-width: 1.4; }
.thumb { width: 11px; height: 13px; background: #cdcdcd; margin-top: 110px; }
.tabs { grid-column: 1 / 3; background: #f0f0f0; display: flex; align-items: stretch; }
.navs { display: flex; }
.navs button { width: 11px; border: 1px solid #ccc; }
.navs svg { width: 9px; height: 10px; }
.tab { width: 36px; font-size: 9px; line-height: 12px; position: relative; }
.tab::after { content: ""; position: absolute; right: 1px; top: 0; height: 100%; border-right: 1px solid #555; transform: skewX(-25deg); }
.tab.on { background: #1f252d; color: #fff; clip-path: polygon(0 0, 100% 0, 86% 100%, 14% 100%); }
.hs { flex: 1; margin-left: 474px; border-left: 3px solid #bbb; display: flex; justify-content: space-between; padding-right: 12px; }

.cmd { flex: none; height: 34px; display: flex; }
.grip { width: 17px; background: linear-gradient(#888, #444); }
.grip svg { width: 17px; height: 34px; fill: none; }
.lines { flex: 1; font-family: "DejaVu Sans Mono", "Noto Sans CJK SC", monospace; font-size: 12px; }
.lines p { background: #c8c8c8; height: 17px; line-height: 17px; padding-left: 2px; }
.entry { background: #fff; border-top: 1px solid #999; height: 17px; display: flex; align-items: center; padding-left: 4px; font-size: 11px; }
.entry > svg { width: 12px; height: 11px; }
.entry > svg.t { width: 7px; }
.entry input { flex: 1; line-height: 14px; }

.status { flex: none; height: 13px; background: linear-gradient(#444, #8a8a8a 10%, #787878); display: flex; align-items: center; padding: 0 15px 0 7px; font-size: 9px; }
.status output { width: 179px; font-family: "Liberation Mono", monospace; font-size: 8px; color: #111; white-space: nowrap; }
.st { display: flex; width: 202px; justify-content: space-between; }
.st svg { width: 13px; height: 12px; background: #a5a5a5; }
.st svg.on { background: #a9d6ea; }
.sr { margin-left: auto; display: flex; align-items: center; gap: 2px; }
.sr svg { width: 12px; height: 12px; background: #9a9a9a; }
.sr svg.t { width: 6px; background: none; }
.sr em { width: 10px; }

.dialog { position: absolute; left: 29%; top: 87px; width: 421px; background: #f0f0f0; border: 1px solid #d8d8d8; box-shadow: 1px 1px 3px #0008; font-family: "Liberation Mono", "Noto Sans CJK SC", monospace; font-size: 9px; line-height: 12px; color: #1c1c1c; }
.lat { font-size: 8px; }
.dtitle { height: 19px; background: #fff; display: flex; align-items: center; gap: 4px; padding: 0 8px 0 1px; }
.dtitle h2 { flex: 1; font: 9px "Open Sans", "Noto Sans CJK SC", sans-serif; }
.dlogo { width: 12px; height: 13px; background: #f4c7c0; }
.dtitle button svg { width: 10px; height: 10px; stroke: #444; fill: none; }
.body { padding: 5px 9px 8px 5px; display: flex; flex-direction: column; }
.fs { border: 1px solid #e0e0e0; margin: 0; min-width: 0; padding: 0 13px 9px 11px; }
.fs legend { padding: 0 1px; margin-left: -7px; line-height: 12px; white-space: nowrap; }
.f { flex: 1; display: grid; grid-template-columns: 53px 1fr; align-items: center; }
.sel { display: flex; align-items: center; height: 14px; border: 1px solid #adadad; background: #e1e1e1; padding: 0 2px 0 3px; }
.btn { border: 1px solid #adadad; background: #e1e1e1; height: 15px; line-height: 12px; white-space: nowrap; }
.setup { display: flex; gap: 4px; padding-top: 10px; }
.setup .btn { width: 81px; }
.printer { display: grid; grid-template-columns: 1fr 81px; gap: 4px; padding: 2px 13px 3px 11px; margin-top: 3px; }
.pl { display: flex; flex-direction: column; }
.pl .f { flex: none; height: 16px; }
.pl dl { margin-top: 4px; display: grid; grid-template-columns: 53px 1fr; grid-auto-rows: 17px; align-items: center; }
.prn { width: 8px; height: 9px; stroke: #222; fill: none; }
.ck { display: flex; align-items: center; gap: 2px; height: 12px; white-space: nowrap; }
.ck input { appearance: none; width: 11px; height: 11px; border: 1px solid #444; background: #fff; display: grid; place-items: center; }
.ck input:checked::before { content: ""; width: 7px; height: 4px; border: solid #333; border-width: 0 0 1px 1px; transform: rotate(-45deg); margin-bottom: 2px; }
.off { color: #929292; }
.ck.off input { border-color: #ccc; }
.ck.off input:checked::before { border-color: #aaa; }
.pl .ck { margin-top: 6px; }
.pr { display: flex; flex-direction: column; gap: 8px; }
.pr .btn { height: 16px; }
.pv { width: 81px; height: 70px; }
.pv text { font: 7px "Liberation Mono", monospace; fill: #fff; }
.two { display: grid; }
.size { grid-template-columns: 291px 1fr; gap: 5px; margin-top: 7px; }
.size .fs { padding: 4px 7px 9px 10px; }
.size legend { margin-left: -5px; }
.size .copies { padding: 4px 31px 7px 27px; }
.size .copies legend { margin-left: -23px; }
.spin { display: flex; width: 48px; height: 16px; border: 1px solid #ccc; color: #888; }
.spin input { flex: 1; width: 0; padding-left: 3px; }
.ud { width: 13px; display: grid; background: #eee; border-left: 1px solid #ccc; }
.ud button { display: grid; place-items: center; }
.ud svg { width: 6px; height: 4px; fill: #555; }
.lower { grid-template-columns: 217px 1fr; gap: 4px; margin-top: 3px; }
.lc { display: flex; flex-direction: column; gap: 3px; }
.area { padding: 3px 10px 12px; }
.area legend { margin-left: -5px; }
.area > label { display: block; }
.drop { position: relative; width: 83px; margin-top: 3px; }
.sel.open { background: #cde4f5; border-color: #3c8fce; }
.pop { position: absolute; z-index: 2; left: 0; top: 100%; width: 100%; list-style: none; background: #fff; border: 1px solid #3c8fce; padding: 1px 0; line-height: 9px; }
.pop li { padding-left: 2px; }
.pop .cur { background: #0a74d0; color: #fff; }
.mark { position: absolute; z-index: 3; left: -2px; top: 12px; width: 92px; height: 14px; border: 2px solid #d91f26; }
.arrow { position: absolute; z-index: 3; left: 101px; top: 20px; width: 76px; height: 22px; }
.offs { padding: 4px 10px 9px; display: flex; flex-direction: column; gap: 7px; }
.offs legend { margin-left: -5px; }
.xy { display: flex; align-items: center; height: 16px; }
.xy > label:first-child { width: 17px; }
.tx { height: 15px; border: 1px solid #888; background: #fff; padding: 0 2px; width: 58px; }
.xy span { margin: 0 25px 0 6px; }
.scale { padding: 6px 10px 9px 6px; display: flex; flex-direction: column; gap: 7px; }
.scale legend { margin-left: -2px; }
.sg { display: grid; grid-template-columns: 42px 1fr; align-items: center; white-space: nowrap; }
.sel.dis { background: #cbcbcb; border-color: #bdbdbd; color: #888; }
.u { display: flex; align-items: center; gap: 3px; height: 15px; }
.u .tx { width: 49px; background: #f0f0f0; border-color: #ccc; color: #888; }
.mm { width: 58px; }
.acts { display: flex; align-items: center; margin-top: 6px; padding: 0 0 0 1px; }
.b1 { width: 66px; margin-right: 12px; }
.b2 { width: 90px; margin-right: 4px; }
.b3 { width: 61px; margin-right: 6px; border: 2px solid #2673b8; line-height: 10px; }
.b4 { width: 62px; margin-right: 4px; }
.more svg { width: 14px; height: 14px; }

.brand { position: absolute; right: 55px; bottom: 14px; width: 180px; height: 84px; background: #223158; color: #ced2dc; display: flex; align-items: center; gap: 12px; padding: 0 0 3px 14px; }
.brand svg { width: 36px; height: 36px; }
.brand strong { display: block; font: bold 26px/28px "Noto Sans CJK SC", sans-serif; white-space: nowrap; }
.brand span { display: block; font: 12px/16px "DejaVu Sans", sans-serif; }
```
